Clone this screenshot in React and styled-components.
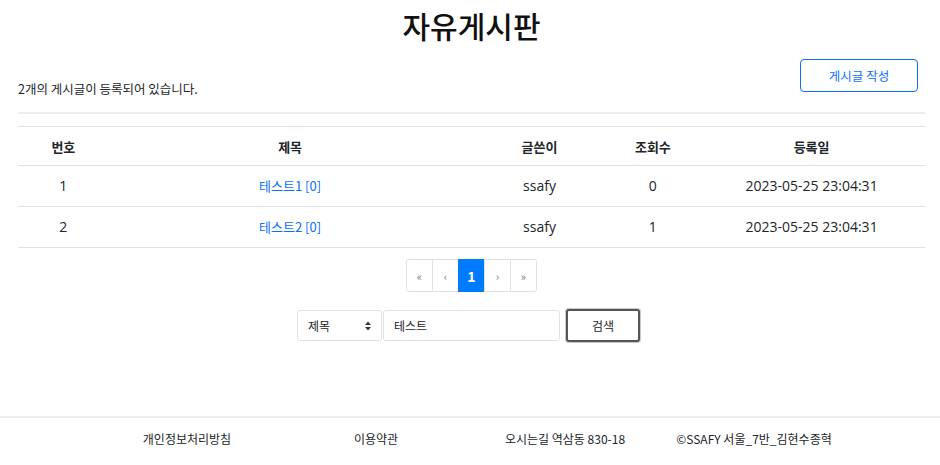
import React from "react";
import styled, { createGlobalStyle } from "styled-components";

const GlobalStyle = createGlobalStyle`
  body {
    margin: 0;
    background: #fff;
    font-family: "Noto Sans CJK KR", "Noto Sans", sans-serif;
    color: #212529;
  }
`;

const posts = [
  { no: 1, title: "테스트1", comments: 0, writer: "ssafy", hit: 0, date: "2023-05-25 23:04:31" },
  { no: 2, title: "테스트2", comments: 0, writer: "ssafy", hit: 1, date: "2023-05-25 23:04:31" },
];

const App = () => {
  return (
    <>
      <GlobalStyle />
      <Main>
        <Title>자유게시판</Title>
        <TopRow>
          <Count>{posts.length}개의 게시글이 등록되어 있습니다.</Count>
          <WriteButton>게시글 작성</WriteButton>
        </TopRow>
        <Divider />
        <Table>
          <thead>
            <tr>
              <Th width="10%">번호</Th>
              <Th width="40%">제목</Th>
              <Th width="15%">글쓴이</Th>
              <Th width="10%">조회수</Th>
              <Th width="25%">등록일</Th>
            </tr>
          </thead>
          <tbody>
            {posts.map((p) => (
              <tr key={p.no}>
                <Td>{p.no}</Td>
                <Td>
                  <TitleLink href="#">
                    {p.title} [{p.comments}]
                  </TitleLink>
                </Td>
                <Td>{p.writer}</Td>
                <Td>{p.hit}</Td>
                <Td>{p.date}</Td>
              </tr>
            ))}
          </tbody>
        </Table>
        <Pagination>
          <PageItem>«</PageItem>
          <PageItem>‹</PageItem>
          <PageItem $active>1</PageItem>
          <PageItem>›</PageItem>
          <PageItem>»</PageItem>
        </Pagination>
        <SearchForm>
          <SelectBox>
            <span>제목</span>
            <svg width="8" height="10" viewBox="0 0 8 10">
              <path d="M4 0.5 L7 4 H1 Z M4 9.5 L7 6 H1 Z" fill="#343a40" />
            </svg>
          </SelectBox>
          <SearchInput defaultValue="테스트" />
          <SearchButton>검색</SearchButton>
        </SearchForm>
      </Main>
      <Footer>
        <FooterInner>
          <FooterItem>개인정보처리방침</FooterItem>
          <FooterItem>이용약관</FooterItem>
          <FooterItem>오시는길 역삼동 830-18</FooterItem>
          <FooterItem>©SSAFY 서울_7반_김현수종혁</FooterItem>
        </FooterInner>
      </Footer>
    </>
  );
};

const Main = styled.main`
  width: 907px;
  margin: 0 15px 0 18px;
  min-height: 416px;
  box-sizing: border-box;
`;

const Title = styled.h1`
  margin: 0;
  padding-top: 5px;
  text-align: center;
  font-size: 30px;
  font-weight: 500;
  line-height: 40px;
  color: #111;
`;

const TopRow = styled.div`
  display: flex;
  justify-content: space-between;
  align-items: flex-end;
  margin-top: 14px;
  padding-right: 7px;
`;

const Count = styled.p`
  margin: 0 0 -3px;
  font-size: 12.5px;
  line-height: 18px;
  color: #212529;
`;

const WriteButton = styled.button`
  width: 118px;
  height: 33px;
  border: 1px solid #0d6efd;
  border-radius: 4px;
  background: #fff;
  color: #0d6efd;
  font-family: inherit;
  font-size: 12.5px;
  margin-bottom: 3px;
  cursor: pointer;
`;

const Divider = styled.hr`
  margin: 17px 0 12px;
  border: 0;
  border-top: 2px solid #ececec;
`;

const Table = styled.table`
  width: 100%;
  border-collapse: collapse;
  border-top: 1px solid #dee2e6;
`;

const Th = styled.th`
  width: ${(p) => p.width};
  height: 38px;
  padding: 0;
  font-size: 13px;
  font-weight: 700;
  border-bottom: 1px solid #dee2e6;
  text-align: center;
  color: #212529;
`;

const Td = styled.td`
  height: 38px;
  padding: 0 0 2px;
  text-align: center;
  border-bottom: 1px solid #dee2e6;
  font-family: "Open Sans", "Noto Sans CJK KR", sans-serif;
  font-size: 14px;
  color: #212529;
`;

const TitleLink = styled.a`
  font-family: "Noto Sans CJK KR", sans-serif;
  font-size: 13px;
  color: #0d6efd;
  text-decoration: none;
`;

const Pagination = styled.ul`
  display: flex;
  justify-content: center;
  list-style: none;
  margin: 11px 0 0;
  padding: 0;
`;

const PageItem = styled.li`
  display: flex;
  align-items: center;
  justify-content: center;
  width: 25px;
  height: 31px;
  border: 1px solid #dee2e6;
  margin-left: -1px;
  font-size: ${(p) => (p.$active ? "14px" : "11px")};
  font-weight: ${(p) => (p.$active ? 700 : 400)};
  color: ${(p) => (p.$active ? "#fff" : "#6c757d")};
  background: ${(p) => (p.$active ? "#007bff" : "#fff")};
  border-color: ${(p) => (p.$active ? "#007bff" : "#dee2e6")};
  &:first-child {
    border-radius: 3px 0 0 3px;
    margin-left: 0;
  }
  &:last-child {
    border-radius: 0 3px 3px 0;
  }
`;

const SearchForm = styled.form`
  display: flex;
  justify-content: center;
  align-items: center;
  gap: 1px;
  margin-top: 17px;
  padding-right: 6px;
`;

const SelectBox = styled.div`
  display: flex;
  align-items: center;
  justify-content: space-between;
  box-sizing: border-box;
  width: 85px;
  height: 31px;
  padding: 0 9px 0 10px;
  border: 1px solid #dee2e6;
  border-radius: 3px;
  font-size: 12px;
  color: #212529;
`;

const SearchInput = styled.input`
  box-sizing: border-box;
  width: 177px;
  height: 31px;
  padding: 0 10px;
  border: 1px solid #dee2e6;
  border-radius: 3px;
  font-family: inherit;
  font-size: 12px;
  color: #212529;
  outline: none;
`;

const SearchButton = styled.button`
  box-sizing: border-box;
  width: 74px;
  height: 33px;
  margin-left: 5px;
  border: 2px solid #555;
  border-radius: 3px;
  box-shadow: 0 0 0 1px #c8c8c8;
  background: #fff;
  font-family: inherit;
  font-size: 12px;
  color: #212529;
`;

const Footer = styled.footer`
  border-top: 2px solid #ececec;
  height: 41px;
  display: flex;
  justify-content: center;
`;

const FooterInner = styled.div`
  display: grid;
  grid-template-columns: repeat(4, 189px);
  align-items: center;
  margin-left: 1px;
`;

const FooterItem = styled.span`
  text-align: center;
  font-size: 12px;
  color: #212529;
`;

export default App;
